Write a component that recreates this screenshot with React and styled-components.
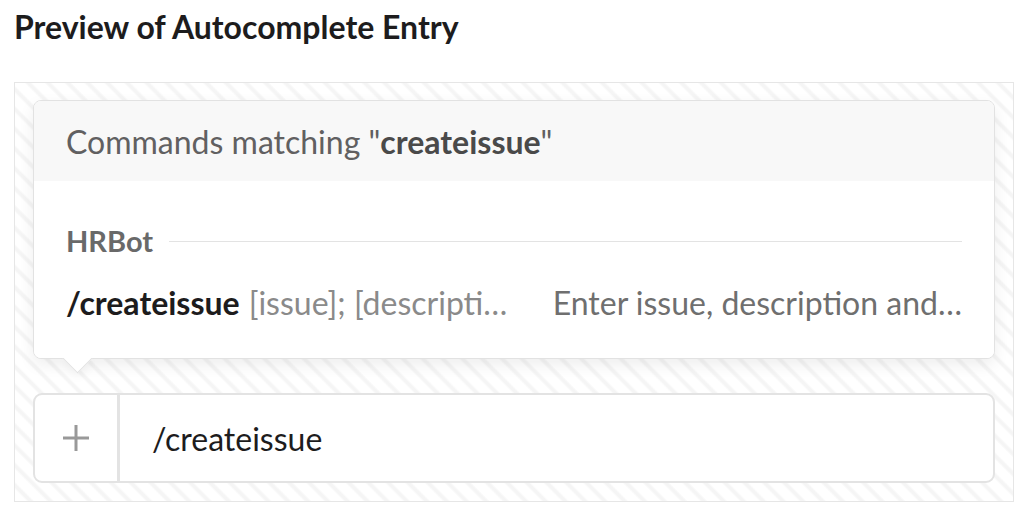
import React from 'react';
import styled, { createGlobalStyle } from 'styled-components';

const GlobalStyle = createGlobalStyle`
  html, body {
    margin: 0;
    padding: 0;
    background: #fff;
    font-family: Lato, "Open Sans", sans-serif;
  }
`;

const Page = styled.div`
  width: 1028px;
  height: 522px;
  padding: 0 14px;
  box-sizing: border-box;
`;

const Title = styled.h2`
  margin: 0;
  padding-top: 8px;
  height: 82px;
  box-sizing: border-box;
  font-size: 32px;
  font-weight: 700;
  color: #1d1c1d;
  line-height: 38px;
`;

const PreviewBox = styled.div`
  border: 1px solid #e6e6e6;
  height: 420px;
  box-sizing: border-box;
  padding: 17px 18px;
  display: flex;
  flex-direction: column;
  background: repeating-linear-gradient(
    45deg,
    #ffffff 0px,
    #ffffff 8px,
    #f5f5f5 10px,
    #f5f5f5 12px,
    #ffffff 14px
  );
`;

const Popup = styled.div`
  position: relative;
  background: #fff;
  border: 1px solid #e2e2e2;
  border-radius: 8px;
  box-shadow: 0 6px 16px rgba(0, 0, 0, 0.07);
  height: 259px;
  box-sizing: border-box;
  flex-shrink: 0;

  &::after {
    content: '';
    position: absolute;
    left: 33px;
    bottom: -11px;
    width: 20px;
    height: 20px;
    background: #fff;
    transform: rotate(45deg);
    border-right: 1px solid #e2e2e2;
    border-bottom: 1px solid #e2e2e2;
    box-shadow: 4px 4px 8px rgba(0, 0, 0, 0.04);
  }
`;

const PopupHeader = styled.div`
  height: 80px;
  background: #f8f8f8;
  border-radius: 7px 7px 0 0;
  display: flex;
  align-items: center;
  padding: 0 32px;
  font-size: 32px;
  color: #616061;
`;

const Strong = styled.b`
  font-weight: 700;
  color: #4a4a4a;
`;

const PopupBody = styled.div`
  padding: 38px 32px 0;
  position: relative;
  z-index: 1;
  background: #fff;
  border-radius: 0 0 7px 7px;
  height: 177px;
  box-sizing: border-box;
`;

const GroupRow = styled.div`
  display: flex;
  align-items: center;
  gap: 16px;
  height: 42px;
  font-size: 29px;
  font-weight: 700;
  color: #696969;

  &::after {
    content: '';
    flex: 1;
    height: 1px;
    background: #e3e3e3;
    margin-top: 2px;
  }
`;

const CommandRow = styled.div`
  display: flex;
  align-items: center;
  justify-content: space-between;
  height: 42px;
  margin-top: 20px;
  font-size: 32px;
`;

const CommandName = styled.span`
  font-weight: 700;
  color: #1d1c1d;
`;

const CommandArgs = styled.span`
  color: #8a8a8a;
  margin-left: 9px;
`;

const CommandDesc = styled.span`
  color: #6f6f6f;
`;

const Spacer = styled.div`
  height: 34px;
  flex-shrink: 0;
`;

const InputBar = styled.div`
  height: 90px;
  box-sizing: border-box;
  border: 2px solid #e3e3e3;
  border-radius: 9px;
  background: #fff;
  display: flex;
  align-items: stretch;
`;

const PlusButton = styled.div`
  width: 82px;
  border-right: 3px solid #e3e3e3;
  display: flex;
  align-items: center;
  justify-content: center;
`;

const InputText = styled.div`
  display: flex;
  align-items: center;
  padding-left: 32px;
  font-size: 32px;
  color: #1d1c1d;
`;

const App = () => {
  return (
    <Page>
      <GlobalStyle />
      <Title>Preview of Autocomplete Entry</Title>
      <PreviewBox>
        <Popup>
          <PopupHeader>
            Commands matching "<Strong>createissue</Strong>"
          </PopupHeader>
          <PopupBody>
            <GroupRow>HRBot</GroupRow>
            <CommandRow>
              <span>
                <CommandName>/createissue</CommandName>
                <CommandArgs>[issue]; [descripti…</CommandArgs>
              </span>
              <CommandDesc>Enter issue, description and…</CommandDesc>
            </CommandRow>
          </PopupBody>
        </Popup>
        <Spacer />
        <InputBar>
          <PlusButton>
            <svg width="28" height="28" viewBox="0 0 28 28">
              <path d="M14 1v26M1 14h26" stroke="#999" strokeWidth="3" fill="none" />
            </svg>
          </PlusButton>
          <InputText>/createissue</InputText>
        </InputBar>
      </PreviewBox>
    </Page>
  );
};

export default App;
